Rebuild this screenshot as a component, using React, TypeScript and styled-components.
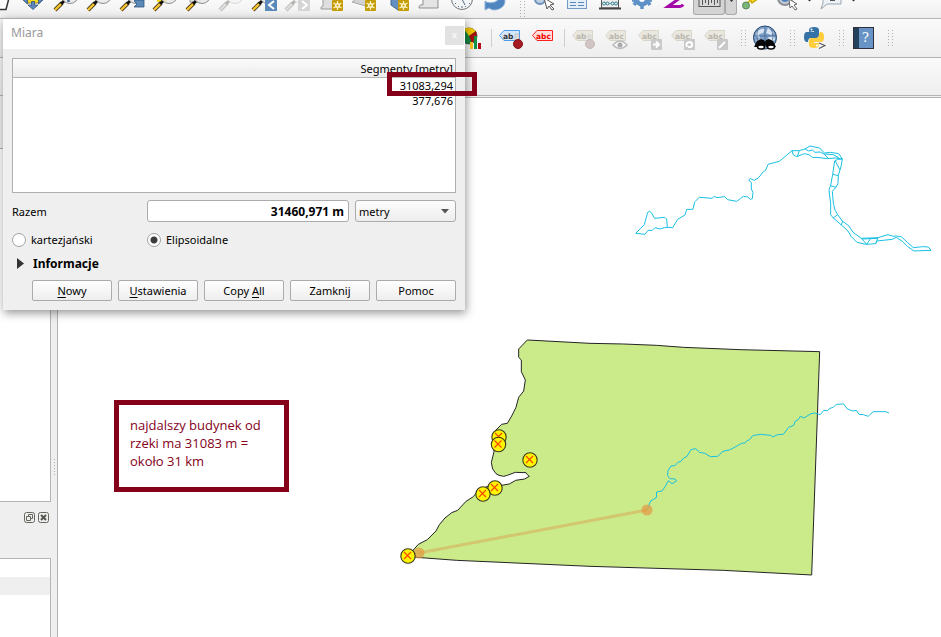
import React from "react";
import styled, { createGlobalStyle } from "styled-components";

const GlobalStyle = createGlobalStyle`
  * { box-sizing: border-box; }
  html, body { margin: 0; height: 100%; overflow: hidden; }
  body { font-family: "Noto Sans", "Open Sans", sans-serif; font-size: 11px; color: #000; background: #efefef; }
  button, input, select { font: inherit; color: inherit; margin: 0; }
`;

const Window = styled.main`
  position: relative;
  display: flex;
  flex-direction: column;
  height: 100vh;
  overflow: hidden;
`;

const ToolRow = styled.div<{ $height: number; $inset?: number }>`
  flex: none;
  display: flex;
  align-items: stretch;
  height: ${(p) => p.$height}px;
  padding-left: ${(p) => p.$inset ?? 0}px;
  overflow: hidden;
  background: linear-gradient(#fafafa, #eeeeee);
  border-bottom: 1px solid #b4b4b4;
`;

const ToolButton = styled.button<{ $width?: number }>`
  flex: none;
  display: block;
  width: ${(p) => p.$width ?? 33}px;
  padding: 0;
  border: 0;
  background: none;
  svg { display: block; }
`;

const PressedButton = styled(ToolButton)`
  height: 15px;
  overflow: hidden;
  border: 1px solid #a9a9a9;
  border-top: 0;
  border-radius: 0 0 3px 3px;
  background: #d4d4d4;
`;

const Divider = styled.span`
  flex: none;
  align-self: center;
  width: 1px;
  height: 18px;
  margin: 0 3px;
  background: #cfcfcf;
`;

const GripBox = styled.span`
  flex: none;
  align-self: center;
  width: 16px;
  padding-left: 8px;
  svg { display: block; }
`;

const Workspace = styled.div`
  flex: 1;
  min-height: 0;
  display: flex;
  margin-top: 1px;
`;

const Docks = styled.aside`
  flex: none;
  display: flex;
  flex-direction: column;
  width: 51px;
`;

const DockPane = styled.div<{ $grow: number; $basis: number }>`
  flex: ${(p) => p.$grow} 0 ${(p) => p.$basis}px;
  border: 1px solid #b4b4b4;
  border-left: 0;
  background: #fff;
`;

const LastPane = styled(DockPane)`
  border-bottom: 0;
`;

const DockHeader = styled.div<{ $height: number }>`
  flex: none;
  display: flex;
  justify-content: flex-end;
  gap: 3px;
  height: ${(p) => p.$height}px;
  padding: 10px 2px 0 0;
`;

const DockButton = styled.button`
  width: 11px;
  height: 11px;
  padding: 0;
  border: 0;
  background: none;
  svg { display: block; }
`;

const StripedRow = styled.div`
  height: 18px;
  margin-top: 18px;
  background: #efefef;
`;

const Splitter = styled.div`
  flex: none;
  display: flex;
  align-items: center;
  justify-content: center;
  width: 6px;
  padding-top: 199px;
`;

const SplitterDots = styled.span`
  width: 1px;
  height: 16px;
  background: repeating-linear-gradient(#b0b0b0 0 1px, transparent 1px 3px);
`;

const MapView = styled.section`
  flex: 1;
  min-width: 0;
  overflow: hidden;
  background: #fff;
  border-top: 1px solid #b4b4b4;
  border-left: 1px solid #b4b4b4;
  svg { display: block; }
`;

const Dialog = styled.section`
  position: absolute;
  left: 3px;
  top: 18px;
  width: 462px;
  background: #efefef;
  border-top: 1px solid #ababab;
  box-shadow: 1px 3px 9px rgba(0, 0, 0, 0.42);
`;

const TitleBar = styled.header`
  display: flex;
  align-items: center;
  justify-content: space-between;
  height: 30px;
  padding: 0 1px 0 8px;
  background: #fff;
`;

const Title = styled.h1`
  margin: 0;
  font-size: 12px;
  line-height: 28px;
  height: 30px;
  font-weight: 400;
  color: #999;
`;

const CloseButton = styled.button`
  width: 19px;
  height: 19px;
  margin-top: 3px;
  padding: 0;
  border: 0;
  background: #e2e2e2;
  svg { display: block; }
`;

const DialogBody = styled.div`
  display: flex;
  flex-direction: column;
  padding: 9px;
`;

const SegmentFrame = styled.div`
  height: 135px;
  border: 1px solid #b0b0b0;
  background: #fff;
`;

const SegmentTable = styled.table`
  width: 100%;
  border-collapse: separate;
  border-spacing: 0;
  th, td { padding: 0 2px; text-align: right; font-size: 11px; font-weight: 400; line-height: 15px; }
  th { height: 19px; padding-top: 1px; background: linear-gradient(#fbfbfb, #ececec); border-bottom: 1px solid #b4b4b4; }
`;

const FieldRow = styled.div`
  display: grid;
  grid-template-columns: 135px 1fr 101px;
  align-items: center;
  height: 22px;
  margin-top: 7px;
`;

const TotalInput = styled.input`
  min-width: 0;
  height: 22px;
  padding: 0 4px;
  border: 1px solid #ababab;
  border-radius: 3px;
  background: #fff;
  text-align: right;
  && { font-size: 12px; font-weight: 700; margin-right: 6px; }
`;

const SelectWrap = styled.div`
  display: grid;
  align-items: center;
  select, svg { grid-area: 1 / 1; }
  svg { justify-self: end; margin-right: 7px; pointer-events: none; }
`;

const UnitSelect = styled.select`
  appearance: none;
  width: 100%;
  height: 22px;
  padding: 0 3px;
  border: 1px solid #ababab;
  border-radius: 3px;
  background: linear-gradient(#fdfdfd, #ededed);
`;

const RadioRow = styled.div`
  display: grid;
  grid-template-columns: 135px 1fr;
  height: 17px;
  margin-top: 9px;
`;

const RadioLabel = styled.label`
  display: flex;
  align-items: center;
  gap: 5px;
`;

const Radio = styled.input`
  appearance: none;
  width: 14px;
  height: 14px;
  border: 1px solid #a2a2a2;
  border-radius: 50%;
  background: #fff;
  &:checked { background: radial-gradient(circle, #3c3c3c 0 3px, #fff 4px); }
`;

const Disclosure = styled.button`
  align-self: flex-start;
  display: flex;
  align-items: center;
  gap: 9px;
  height: 18px;
  margin-top: 6px;
  padding: 0 5px;
  border: 0;
  background: none;
  && { font-size: 12px; font-weight: 700; }
`;

const Actions = styled.div`
  display: flex;
  justify-content: flex-end;
  gap: 6px;
  margin-top: 8px;
`;

const ActionButton = styled.button`
  width: 80px;
  height: 21px;
  padding: 0;
  border: 1px solid #ababab;
  border-radius: 2px;
  background: linear-gradient(#fefefe, #eeeeee);
  u { text-underline-offset: 2px; }
`;

const Highlight = styled.div`
  position: absolute;
  left: 387px;
  top: 72px;
  width: 90px;
  height: 24px;
  border: 5px solid #850019;
`;

const Note = styled.p`
  position: absolute;
  left: 114px;
  top: 400px;
  width: 175px;
  height: 92px;
  margin: 0;
  padding: 11px;
  border: 5px solid #850019;
  background: #fff;
  color: #850019;
  font: 13px/18px "Open Sans", sans-serif;
  white-space: pre-line;
`;

/* ---------- toolbar drawings ---------- */

type IconProps = { children: React.ReactNode; height?: number };
const Icon = ({ children, height = 18 }: IconProps) => (
  <svg width="33" height={height} viewBox={`0 0 33 ${height}`} aria-hidden="true">{children}</svg>
);

const Grip = () => (
  <GripBox>
    <svg width="5" height="16" shapeRendering="crispEdges" aria-hidden="true">
      <path d="M.5 0v16M4.500 0v16" stroke="#b2b2b2" strokeDasharray="1 2" />
    </svg>
  </GripBox>
);

const Lens = ({ grey = false }: { grey?: boolean }) => (
  <g opacity={grey ? 0.3 : 1}>
    <path d="M5 10 12 3" stroke="#4b3d20" strokeWidth="4" />
    <path d="M5 10 11.500 3.500" stroke={grey ? "#aaa" : "#f6c62f"} strokeWidth="2.400" />
    <path d="M11 4 14 1" stroke="#111" strokeWidth="3" />
    <circle cx="20" cy="-5" r="8.500" fill="#e9e9e7" fillOpacity="0.85" stroke="#8d8d8d" />
  </g>
);

const NewBadge = ({ x = 16 }: { x?: number }) => (
  <g>
    <rect x={x} y="0" width="11" height="11" rx="1" fill="#c49c05" />
    <path d={`M${x + 5.5} 1v9M${x + 1.5} 3l8 5M${x + 9.5} 3l-8 5`} stroke="#fff6ce" strokeWidth="1.2" />
    <circle cx={x + 5.5} cy="5.5" r="2.5" fill="#fff6ce" />
    <circle cx={x + 5.5} cy="5.5" r="1" fill="#c49c05" />
  </g>
);

const topIcons: { name: string; art: React.ReactNode }[] = [
  { name: "Przesuń mapę", art: <><path d="M9-3h14v6H9z" fill="#f4da1c" stroke="#8f8730" /><path d="M14.500 1.500h3V5H21l-5 4.500L11 5h3.500zM10.500-1v5L6 0zM21.500-1v5L26 0z" fill="#5c87bd" stroke="#34577f" strokeWidth="0.8" /></> },
  { name: "Powiększ", art: <><Lens /><path d="M18.500-3v5" stroke="#3d6797" strokeWidth="2.500" /></> },
  { name: "Pomniejsz", art: <Lens /> },
  { name: "Pełny zasięg", art: <><Lens /><path d="M19 0h9v7H18l3-3-3-3z" fill="#5b89ba" stroke="#34577f" strokeWidth="0.800" /></> },
  { name: "Powiększ do zaznaczenia", art: <><path d="M8-2h10v4H8z" fill="#f4da1c" /><Lens /></> },
  { name: "Powiększ do warstwy", art: <><path d="M8-2h10v4H8z" fill="#dde3df" stroke="#999" /><Lens /></> },
  { name: "Powiększenie rzeczywiste", art: <Lens grey /> },
  { name: "Poprzedni widok", art: <><Lens /><rect x="17" y="-1" width="12" height="12" fill="#5b89ba" /><path d="m26 1-5 4 5 4" fill="none" stroke="#fff" strokeWidth="2" /></> },
  { name: "Następny widok", art: <><Lens grey /><rect x="17" y="-1" width="12" height="12" fill="#d5d5d5" /><path d="m21 1 5 4-5 4" fill="none" stroke="#fff" strokeWidth="2" /></> },
  { name: "Nowy wydruk", art: <><path d="M9-3v9q-3 1-2 3h15V-3z" fill="#dedede" stroke="#999" /><NewBadge x={18} /></> },
  { name: "Nowa warstwa", art: <><path d="M5 2 12-3l10 3v7z" fill="#d2d2d2" stroke="#aaa" /><NewBadge x={18} /></> },
  { name: "Nowy widok 3D", art: <><path d="M11-2h10v12h-3l-7-5z" fill="#6490c1" stroke="#3f648c" /><NewBadge x={18} /></> },
  { name: "Układ", art: <path d="M10-3v8q-4-1-4 3h19v-11z" fill="#e4e4e4" stroke="#8f8f8f" /> },
  { name: "Kontroler czasu", art: <><circle cx="16" cy="-1" r="10.500" fill="#f3f5f7" stroke="#777" /><path d="M16-1 19 5M9 4l1-1M12 7l1-1M16 8V6M20 7l-1-1M24 4l-1-1" stroke="#536d85" /></> },
  { name: "Odśwież", art: <path d="M6 1q3 3 10 1l9-6q3 8-3 12-7 4-12 0l-4 2z" fill="#4f86bf" stroke="#8eb2d8" /> },
];

const queryIcons: { name: string; art: React.ReactNode }[] = [
  { name: "Informacje o obiekcie", art: <><circle cx="12" cy="-1" r="5" fill="#bdd1e6" stroke="#6c90b7" strokeWidth="2" /><path d="m16-2 10 6-4 1 4 4-2 1-3-4-2 3z" fill="#fff" stroke="#555" /></> },
  { name: "Tabela atrybutów", art: <><rect x="6.500" y="-5" width="19" height="13.500" fill="#e5eff8" stroke="#7199c4" /><path d="M9 2.500h6m2 0h6M9 5.500h6m2 0h6" stroke="#5b87b8" /></> },
  { name: "Kalkulator pól", art: <><path d="M7.500-2V8h17V-2" fill="#eee" stroke="#555" /><path d="M8 3.500h16" stroke="#79b4c4" /><g fill="#dff2f5" stroke="#377c8c"><circle cx="10" cy="3.500" r="1.500" /><circle cx="13.500" cy="3.500" r="1.500" /><circle cx="18.500" cy="3.500" r="1.500" /><circle cx="22" cy="3.500" r="1.500" /></g><path d="M5 8.500h22" stroke="#444" strokeWidth="2" /></> },
  { name: "Ustawienia", art: <><circle cx="15" cy="-1" r="7.500" fill="#5d91c8" /><path d="m15 4 0 5M9 2 7 5M21 2l2 3M5 0h3M22 0h3" stroke="#5d91c8" strokeWidth="3.500" /><circle cx="15" cy="-1" r="3" fill="#fff" /></> },
  { name: "Statystyki", art: <path d="M20-2 8 6.500h12q2 0 3-2" fill="none" stroke="#a40aa8" strokeWidth="3" /> },
];

const TopLate = ({ kind }: { kind: "tip" | "action" | "note" }) => (
  <Icon>
    {kind === "tip" && <><path d="m12-2 3 5 7-5" fill="#f8dd30" stroke="#ccaa00" strokeWidth="1.500" /><path d="m9 4 5-4" stroke="#d7b915" strokeWidth="2" /><circle cx="9" cy="5.500" r="3.500" fill="#7ab679" stroke="#5b885b" /></>}
    {kind === "action" && <><circle cx="15" cy="-2" r="7" fill="#c8cdd3" stroke="#8a8f98" strokeWidth="2" /><circle cx="15" cy="-2" r="4" fill="#4c82c0" /><path d="m19-1 8 5-3 1 3 4-2 1-3-4-2 2z" fill="#fff" stroke="#666" /></>}
    {kind === "note" && <><path d="M9-3v6l-2 6 6-5h14v-7" fill="#edf2f6" stroke="#9aa6b0" /><path d="M16 0h5" stroke="#555" strokeWidth="2" /></>}
  </Icon>
);

const Tag = ({ text, fill, stroke, color, x = 4, y = 11 }: { text: string; fill: string; stroke: string; color: string; x?: number; y?: number }) => (
  <g transform={`translate(${x} ${y})`}>
    <path d="M.5 5.500 5 .5h15.500v10H5z" fill={fill} stroke={stroke} />
    <text x="4" y="8.500" fontFamily="DejaVu Sans" fontSize="7.500" fontWeight="700" fill={color}>{text}</text>
  </g>
);

const GreyTag = ({ text = "abc", children }: { text?: string; children: React.ReactNode }) => (
  <Icon height={38}><Tag text={text} fill="#e9e7de" stroke="#d8d5cb" color="#b9b6ae" />{children}</Icon>
);

const GreyBadge = ({ d }: { d: string }) => (
  <g><rect x="17" y="20" width="11" height="11" rx="1" fill="#c9c9c9" /><path d={d} fill="none" stroke="#fff" strokeWidth="2" /></g>
);

const GlobeIcon = () => (
  <Icon height={38}>
    <circle cx="16" cy="18.500" r="11.500" fill="#7fa1ca" stroke="#24446c" />
    <path d="M7 14q4-5 9-4l-2 4-4 1 1 4-4-1zM19 9l6 5-3 2-5-2zM7 21l7-1-2 5zM19 18l6-1 1 4-5 2z" fill="#dae5f1" />
    <path d="M5 17h22M16 7v18M9 10q-3 8 2 16M22 10q4 8 0 13" fill="none" stroke="#375e8d" strokeWidth="0.700" />
    <path d="m12 20 3 1 1 2 1-2 3-1 4 2 3 6H17l-1-2-1 2H5l3-6z" fill="#080808" />
    <ellipse cx="12" cy="28" rx="3.500" ry="2" fill="#fff" stroke="#000" strokeWidth="1.500" />
    <ellipse cx="22" cy="28" rx="3.500" ry="2" fill="#fff" stroke="#000" strokeWidth="1.500" />
  </Icon>
);

const PythonIcon = () => (
  <Icon height={38}>
    <path d="M11 13v-2q0-3 5-3t5 3v5q0 3-3 3h-5q-3 0-3 4H9q-3 0-3-5t3-5h7v-1z" fill="#3572a5" />
    <path d="M22 13h1q3 0 3 5t-3 5h-7v1h5v2q0 3-5 3t-5-3v-4q0-3 3-3h4q3 0 3-4z" fill="#ffce3d" />
    <circle cx="13.500" cy="10.500" r="1" fill="#fff" /><circle cx="19" cy="26.500" r="1" fill="#fff" />
    <path d="m21 24 6 2.500-6 3" fill="none" stroke="#fff" strokeWidth="3" />
    <path d="m21 24 6 2.500-6 3" fill="none" stroke="#555" strokeWidth="1.200" />
  </Icon>
);

const HelpIcon = () => (
  <Icon height={38}>
    <rect x="6.500" y="8.500" width="20" height="21" fill="#6794c5" stroke="#302f3a" />
    <path d="M7 9h5v20H7z" fill="#24415c" />
    <text x="15" y="23" fontFamily="DejaVu Serif" fontSize="13" fill="#fff">?</text>
  </Icon>
);

/* ---------- map ---------- */

const Building = ({ x, y }: { x: number; y: number }) => (
  <g transform={`translate(${x} ${y})`}>
    <circle r="7.200" fill="#fff500" stroke="#3a3a1c" strokeWidth="1.100" />
    <path d="m-4-4 7 7m0-7-7 7" stroke="#fb4a00" strokeWidth="1.200" />
  </g>
);

const buildings = [[499, 437], [498.5, 444.5], [530, 460], [495, 488], [483, 494], [408, 556]];

const county =
  "412,30 386,57 386,82 394,90 394,125 406,150 401,183 386,202 378,232 365,258 352,280 335,283 315,303 308,330 312,365 304,398 308,417 318,431 327,436 341,439 352,436 376,427 408,428 412,434 418,439 404,447 377,451 358,462 335,466 290,470 262,485 250,500 228,514 203,541 185,548 165,564 148,584 138,603 112,629 85,643 70,660 53,680 200,691 600,709 1000,721 1265,735 1289,65 1050,59 880,52 800,46 700,42 600,40";

const riverCourse =
  "142,292 140,267 133,262 104,265 94,248 88,244 83,247 73,284 47,310 75,313 84,301 97,301 105,293 119,297 133,293 143,292 158,293 173,268 195,255 200,238 219,238 224,216 238,202 276,205 283,199 291,203 314,200 323,209 350,214 361,206 370,199 383,201 391,208 397,206 399,188 394,177 394,158 386,150 391,146 403,151 416,143 430,125 437,121 444,103 478,94 516,62 538,62 555,57 570,48 599,54 613,69 631,67 656,71 667,87 663,110 655,136 654,160 648,172 637,184 640,220 645,240 653,254 667,273 687,288 699,307 724,325 774,323 804,314 821,319 829,318 845,321 862,337 880,353 908,350 925,351 933,361 882,363 862,349 847,334 829,322 817,328 771,333 767,341 738,343 711,337 694,320 684,303 664,285 640,264 632,254 632,222 627,180 632,166 638,133 644,93 653,88 667,87";

const riverBranches = [
  "516,62 520,75 530,80 553,71 567,74 577,82 600,83 622,86 648,84 667,87",
  "555,57 566,63 577,60 585,67 600,66 612,72 625,85",
  "538,62 532,79",
  "613,72 640,74 657,84",
  "646,93 660,120",
  "639,133 655,137",
  "630,167 648,172",
  "640,264 653,254",
  "664,285 668,273",
  "724,325 740,343 752,325",
  "774,323 767,341",
  "727,327 774,325",
];

const RiverMap = () => (
  <svg width="883" height="539" viewBox="58 98 883 539" role="img" aria-label="Mapa">
    <g transform="translate(390 330) scale(.33333)">
      <polygon fill="#cbeb8b" stroke="#232323" strokeWidth="3" strokeLinejoin="round" points={county} />
    </g>
    <g fill="none" stroke="#19bfe3" strokeWidth="3" strokeLinejoin="round">
      <g transform="translate(620 130) scale(.33333)">
        <polyline points={riverCourse} />
        {riverBranches.map((b) => <polyline key={b} points={b} />)}
      </g>
      <g transform="translate(630 330) scale(.33333)">
        <polyline points="53,536 62,513 79,503 80,486 96,483 106,469 115,452 126,461 140,453 135,447 120,446 113,437 114,422 123,408 135,407 144,397 153,394 160,385 171,379 183,359 197,356 209,367 225,370 241,380 263,379 279,364 301,359 335,340 345,339 351,332 359,329 368,317 391,313 423,316 428,321 443,314 460,313 476,292 491,286 496,273 505,269 511,259 522,264 543,251 554,249 571,254 581,241 592,242 600,235 610,232 619,223 641,222 651,236 668,243 679,241 687,253 700,254 715,259 729,245 767,245 777,249" />
      </g>
    </g>
    <g fill="#e39a43" fillOpacity=".72">
      <path d="m419 553 228-43" stroke="#d9a455" strokeOpacity=".52" strokeWidth="3" />
      <circle cx="419" cy="553" r="5.500" /><circle cx="647" cy="510" r="5.500" />
    </g>
    {buildings.map(([x, y]) => <Building key={`${x}-${y}`} x={x} y={y} />)}
  </svg>
);

const segments = ["31083,294", "377,676"];

export default function App() {
  return (
    <Window>
      <GlobalStyle />
      <ToolRow $height={19}>
        <ToolButton $width={17} aria-label="Nowy projekt"><svg width="17" height="18"><path d="M-2 9.500h8L9-2" fill="#fff" stroke="#333" strokeWidth="1.500" /></svg></ToolButton>
        {topIcons.map((i) => <ToolButton key={i.name} aria-label={i.name}><Icon>{i.art}</Icon></ToolButton>)}
        <Grip />
        {queryIcons.map((i) => <ToolButton key={i.name} aria-label={i.name}><Icon>{i.art}</Icon></ToolButton>)}
        <PressedButton $width={32} aria-label="Zmierz linię" aria-pressed="true">
          <Icon><rect x="5" y="-5" width="21" height="11.500" fill="#d9d9d9" stroke="#555" /><path d="M8.500 0v5M11.500 0v3M14.500 0v5M17.500 0v3M20.500 0v5M23.500 0v3" stroke="#555" /></Icon>
        </PressedButton>
        <PressedButton $width={12} aria-label="Narzędzia pomiaru"><svg width="10" height="14"><path d="M3-1h5L5.500 2z" fill="#333" /></svg></PressedButton>
        <ToolButton aria-label="Podpowiedzi"><TopLate kind="tip" /></ToolButton>
        <ToolButton aria-label="Uruchom akcję"><TopLate kind="action" /></ToolButton>
        <ToolButton $width={11} aria-label="Lista akcji"><svg width="11" height="18"><path d="M4-1h5L6.500 1.500z" fill="#333" /></svg></ToolButton>
        <ToolButton aria-label="Adnotacja"><TopLate kind="note" /></ToolButton>
        <ToolButton $width={11} aria-label="Lista adnotacji"><svg width="11" height="18"><path d="M4-1h5L6.500 1.500z" fill="#333" /></svg></ToolButton>
      </ToolRow>

      <ToolRow $height={39} $inset={455}>
        <ToolButton aria-label="Diagramy">
          <Icon height={38}><circle cx="14" cy="17" r="8" fill="#138a42" stroke="#333" strokeWidth=".7" /><path d="M14 17 9 10q6-4 12 2z" fill="#f3c800" /><path d="m14 17 7-5q3 7-4 12z" fill="#a71010" /><path d="M15 23h3v7h-3z" fill="#ffc21c" /><path d="M19 17h3v13h-3z" fill="#149447" /><path d="M23 24h3v6h-3z" fill="#b40d13" /></Icon>
        </ToolButton>
        <Divider />
        <ToolButton aria-label="Etykiety warstwy"><Icon height={38}><Tag text="ab" fill="#d5e7fb" stroke="#4b9ceb" color="#333" /><path d="M20 15h4v8h-4z" fill="#ddd" stroke="#aaa" strokeWidth=".5" /><circle cx="23" cy="25" r="4.500" fill="#a51c22" stroke="#7f1118" /></Icon></ToolButton>
        <ToolButton aria-label="Nieumieszczone etykiety"><Icon height={38}><Tag text="abc" fill="#ffdedb" stroke="#fa2020" color="#f00000" /></Icon></ToolButton>
        <Divider />
        <ToolButton disabled aria-label="Przypnij etykiety"><GreyTag text="ab"><path d="M20 16h3v8h-3z" fill="#ddd" stroke="#ccc" strokeWidth=".5" /><circle cx="22" cy="25" r="4.500" fill="#d1c4c4" stroke="#c5b8b8" /></GreyTag></ToolButton>
        <ToolButton disabled aria-label="Pokaż etykiety"><GreyTag><path d="M12 26q7-8 14 0-7 7-14 0z" fill="#f8f8f8" stroke="#bbb" strokeWidth="1.500" /><circle cx="19" cy="26" r="2.500" fill="#aaa" /></GreyTag></ToolButton>
        <ToolButton disabled aria-label="Przesuń etykietę"><GreyTag><GreyBadge d="M19 25.500h6m-3-3 3 3-3 3" /></GreyTag></ToolButton>
        <ToolButton disabled aria-label="Obróć etykietę"><GreyTag><GreyBadge d="M20 28q-2-5 3-5 4 2 1 5h-3" /></GreyTag></ToolButton>
        <ToolButton disabled aria-label="Zmień etykietę"><GreyTag><GreyBadge d="m19 29 6-6" /></GreyTag></ToolButton>
        <Grip />
        <ToolButton aria-label="Wyszukaj w katalogu"><GlobeIcon /></ToolButton>
        <Grip />
        <ToolButton aria-label="Konsola Pythona"><PythonIcon /></ToolButton>
        <Grip />
        <ToolButton aria-label="Pomoc QGIS"><HelpIcon /></ToolButton>
        <Grip />
      </ToolRow>
      <ToolRow $height={38} />

      <Workspace>
        <Docks>
          <DockHeader $height={51} />
          <DockPane $grow={0} $basis={354} />
          <DockHeader $height={56}>
            <DockButton aria-label="Odłącz panel"><svg width="11" height="11"><rect x=".5" y=".5" width="10" height="10" rx="2" fill="#eee" stroke="#66665f" /><path d="M4.500 4V2.500h4v4H7M2.500 4.500h4v4h-4z" fill="none" stroke="#66665f" /></svg></DockButton>
            <DockButton aria-label="Zamknij panel"><svg width="11" height="11"><rect x=".5" y=".5" width="10" height="10" rx="2" fill="#eee" stroke="#66665f" /><path d="m3 3 5 5m0-5-5 5" stroke="#55554f" strokeWidth="2" /></svg></DockButton>
          </DockHeader>
          <LastPane $grow={1} $basis={0}><StripedRow /></LastPane>
        </Docks>
        <Splitter><SplitterDots /></Splitter>
        <MapView><RiverMap /></MapView>
      </Workspace>

      <Note>{"najdalszy budynek od\nrzeki ma 31083 m =\nokoło 31 km"}</Note>

      <Dialog role="dialog" aria-labelledby="measure-title">
        <TitleBar>
          <Title id="measure-title">Miara</Title>
          <CloseButton aria-label="Zamknij okno"><svg width="19" height="19"><path d="m7.500 7 4 5m0-5-4 5" stroke="#f6f6f6" strokeWidth="1.300" /></svg></CloseButton>
        </TitleBar>
        <DialogBody>
          <SegmentFrame>
            <SegmentTable>
              <thead><tr><th scope="col">Segmenty [metry]</th></tr></thead>
              <tbody>{segments.map((s) => <tr key={s}><td>{s}</td></tr>)}</tbody>
            </SegmentTable>
          </SegmentFrame>
          <FieldRow>
            <label htmlFor="total">Razem</label>
            <TotalInput id="total" readOnly value="31460,971 m" />
            <SelectWrap>
              <UnitSelect aria-label="Jednostki" defaultValue="metry"><option>metry</option></UnitSelect>
              <svg width="8" height="5"><path d="M0 0h8L4 4.500z" fill="#555" /></svg>
            </SelectWrap>
          </FieldRow>
          <RadioRow>
            <RadioLabel><Radio type="radio" name="mode" />kartezjański</RadioLabel>
            <RadioLabel><Radio type="radio" name="mode" defaultChecked />Elipsoidalne</RadioLabel>
          </RadioRow>
          <Disclosure aria-expanded="false"><svg width="7" height="11"><path d="M0 0v11l7-5.500z" fill="#333" /></svg>Informacje</Disclosure>
          <Actions>
            <ActionButton><u>N</u>owy</ActionButton>
            <ActionButton><u>U</u>stawienia</ActionButton>
            <ActionButton>Copy <u>A</u>ll</ActionButton>
            <ActionButton>Zamknij</ActionButton>
            <ActionButton>Pomoc</ActionButton>
          </Actions>
        </DialogBody>
      </Dialog>
      <Highlight />
    </Window>
  );
}
